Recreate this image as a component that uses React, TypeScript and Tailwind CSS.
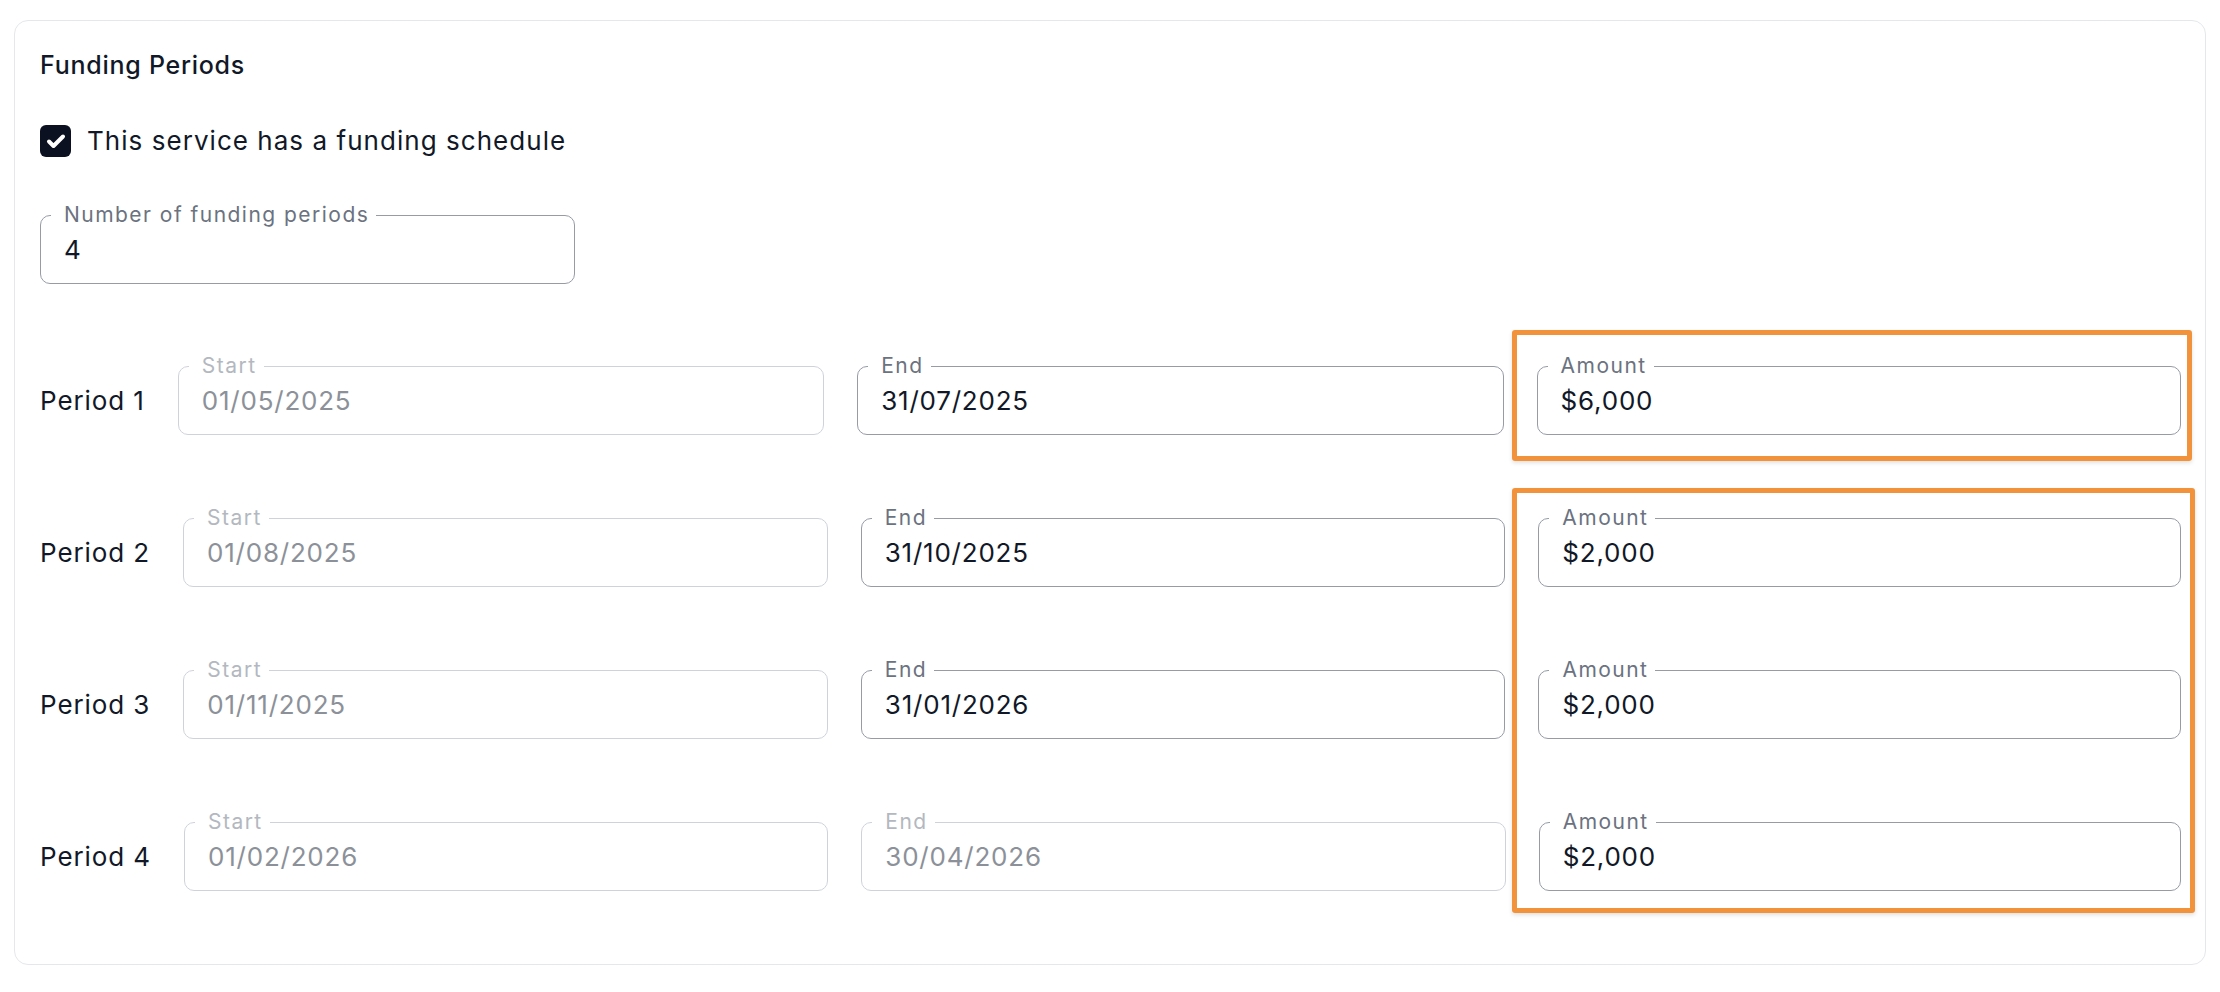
import React from 'react';

type Period = {
  label: string;
  start: string;
  end: string;
  endDisabled?: boolean;
  amount: string;
};

const PERIODS: Period[] = [
  { label: 'Period 1', start: '01/05/2025', end: '31/07/2025', amount: '$6,000' },
  { label: 'Period 2', start: '01/08/2025', end: '31/10/2025', amount: '$2,000' },
  { label: 'Period 3', start: '01/11/2025', end: '31/01/2026', amount: '$2,000' },
  { label: 'Period 4', start: '01/02/2026', end: '30/04/2026', endDisabled: true, amount: '$2,000' },
];

function OutlinedField({
  legend,
  value,
  disabled = false,
  className = '',
}: {
  legend: string;
  value: string;
  disabled?: boolean;
  className?: string;
}) {
  return (
    <fieldset
      className={`rounded-[10px] border bg-white ${
        disabled ? 'border-[#cfd3d9]' : 'border-[#969ba6]'
      } ${className}`}
    >
      <legend
        className={`ml-[10px] pl-[13px] pr-[7px] text-[21px] leading-[24px] tracking-[0.07em] ${
          disabled ? 'text-[#b3b8c0]' : 'text-[#6b7280]'
        }`}
      >
        {legend}
      </legend>
      <div
        className={`pl-[23px] pt-[8px] pb-[18px] text-[26px] leading-[30px] tracking-[0.03em] ${
          disabled ? 'text-[#8c9199]' : 'text-[#111827]'
        }`}
      >
        {value}
      </div>
    </fieldset>
  );
}

export default function App() {
  return (
    <div className="min-h-screen bg-white font-['Inter',sans-serif] pt-[20px] pl-[14px]">
      <div className="w-[2192px] rounded-[14px] border border-[#e5e7eb] pl-[25px] pr-[24px] pt-[28px] pb-[73px]">
        <h2 className="text-[25px] font-medium leading-[32px] tracking-[0.03em] text-[#111827]">Funding Periods</h2>

        <label className="mt-[44px] flex h-[32px] items-center gap-[16px]">
          <span className="flex h-[32px] w-[31px] items-center justify-center rounded-[6px] bg-[#0b1120]">
            <svg viewBox="0 0 24 24" className="h-[24px] w-[24px]" fill="none" stroke="white" strokeWidth={4} strokeLinecap="round" strokeLinejoin="round">
              <path d="M5 12.5l4.5 4.5L19 7.5" />
            </svg>
          </span>
          <span className="text-[26px] leading-[30px] tracking-[0.04em] text-[#111827]">This service has a funding schedule</span>
        </label>

        <OutlinedField legend="Number of funding periods" value="4" className="mt-[46px] w-[535px]" />

        <div className="mt-[70px] flex flex-col gap-[71px]">
          {PERIODS.map((p, i) => (
            <div key={p.label} className="flex items-start gap-[33px]">
              <span className="mt-[32px] whitespace-nowrap text-[26px] leading-[30px] tracking-[0.035em] text-[#111827]">{p.label}</span>
              <OutlinedField legend="Start" value={p.start} disabled className="min-w-0 flex-1" />
              <OutlinedField legend="End" value={p.end} disabled={p.endDisabled} className="min-w-0 flex-1" />
              <div className="relative min-w-0 flex-1">
                <OutlinedField legend="Amount" value={p.amount} />
                {i === 0 && (
                  <div className="pointer-events-none absolute -left-[25px] -right-[11px] -top-[24px] -bottom-[26px] rounded-[3px] border-[5px] border-[#f2923a] shadow-[0_2px_4px_rgba(0,0,0,0.12)]" />
                )}
                {i === 1 && (
                  <div className="pointer-events-none absolute -left-[26px] -right-[14px] -top-[18px] -bottom-[326px] rounded-[3px] border-[5px] border-[#f2923a] shadow-[0_2px_4px_rgba(0,0,0,0.12)]" />
                )}
              </div>
            </div>
          ))}
        </div>
      </div>
    </div>
  );
}
